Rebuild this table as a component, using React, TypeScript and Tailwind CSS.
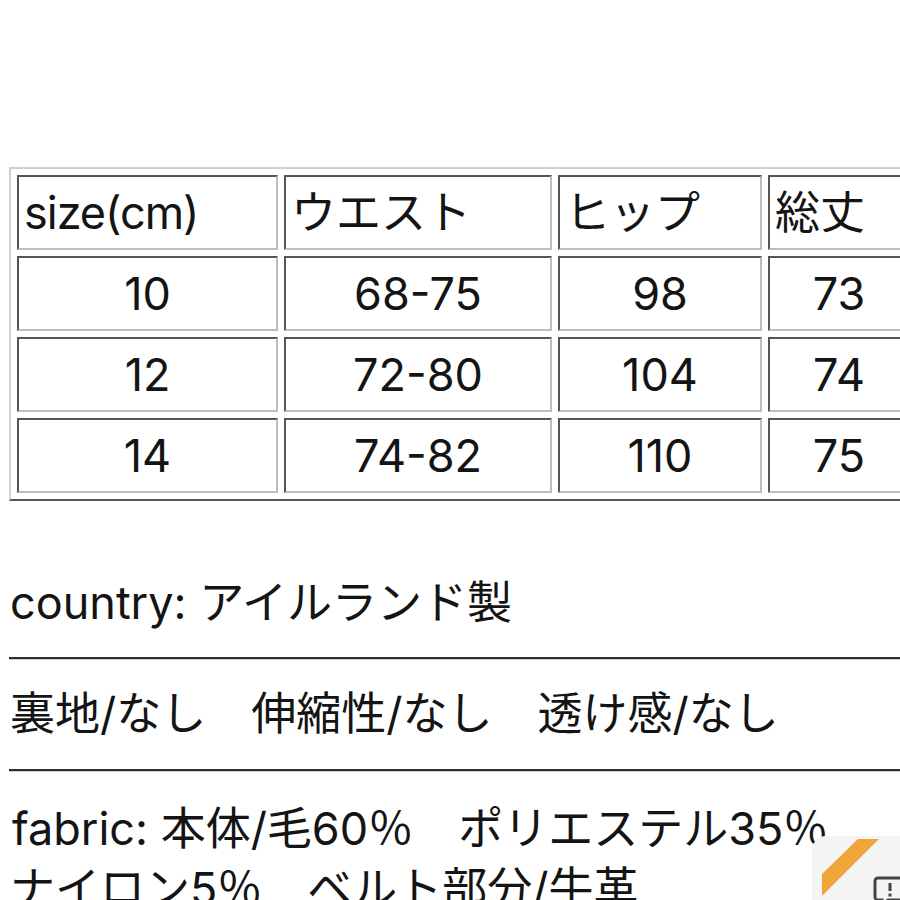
const rows = [
  ["10", "68-75", "98", "73"],
  ["12", "72-80", "104", "74"],
  ["14", "74-82", "110", "75"],
];

const widths = ["w-[261px]", "w-[268px]", "w-[204px]", "w-[142px]"];

const cell =
  "h-[75px] p-0 px-[5px] border-2 border-t-[#555] border-l-[#555] border-b-[#bdbdbd] border-r-[#bdbdbd] align-middle";

export default function App() {
  return (
    <div
      className="relative h-[900px] w-[900px] overflow-hidden bg-white pl-[9px] pt-[167px] text-[45px] text-[#141414]"
      style={{ fontFamily: 'Inter, "Noto Sans CJK JP", sans-serif' }}
    >
      <div className="w-[1000px]">
        <table className="w-[909px] table-fixed border-separate border-spacing-[6px] border-2 border-t-[#cfcfcf] border-l-[#cfcfcf] border-b-[#555] border-r-[#555] leading-none">
          <colgroup>
            <col className="w-[261px]" />
            <col className="w-[268px]" />
            <col className="w-[204px]" />
            <col className="w-[142px]" />
          </colgroup>
          <tbody>
            <tr>
              {["size(cm)", "ウエスト", "ヒップ", "総丈"].map((h, i) => (
                <td
                  key={h}
                  className={`${cell} ${widths[i]} text-left whitespace-nowrap ${i === 0 ? "tracking-[-1px]" : ""}`}
                >
                  {h}
                </td>
              ))}
            </tr>
            {rows.map((r) => (
              <tr key={r[0]}>
                {r.map((v, i) => (
                  <td key={i} className={`${cell} ${widths[i]} text-center`}>
                    {v}
                  </td>
                ))}
              </tr>
            ))}
          </tbody>
        </table>

        <div className="mt-[73px] leading-[58px] whitespace-nowrap">
          <p className="pl-px">country: アイルランド製</p>
          <div className="my-[25px] h-[3px] border-t-2 border-[#2e2e2e] bg-[#cfcfcf]" />
          <p className="pl-px">裏地/なし　伸縮性/なし　透け感/なし</p>
          <div className="mb-[27px] mt-[26px] h-[3px] border-t-2 border-[#2e2e2e] bg-[#cfcfcf]" />
          <p className="pl-[3px] leading-[60px]">fabric: 本体/毛60％　ポリエステル35％</p>
          <p className="pl-px leading-[60px]">ナイロン5％　ベルト部分/牛革</p>
        </div>
      </div>

      <div className="absolute left-[812px] top-[836px] h-[80px] w-[100px] rounded-tl-[14px] bg-[#f5f5f5]">
        <svg width="100" height="80" viewBox="0 0 100 80" className="absolute left-0 top-0">
          <polygon points="46,3 67,3 10,60 10,38" fill="#f0a53a" />
          <path
            d="M66 42 h24 a3 3 0 0 1 3 3 v16 a3 3 0 0 1 -3 3 h-14 l-6 6 v-6 h-4 a3 3 0 0 1 -3 -3 v-16 a3 3 0 0 1 3 -3 z"
            fill="none"
            stroke="#444"
            strokeWidth="3"
          />
          <rect x="76.5" y="47" width="3" height="8" fill="#444" />
          <rect x="76.5" y="57.5" width="3" height="3" fill="#444" />
        </svg>
      </div>
    </div>
  );
}
